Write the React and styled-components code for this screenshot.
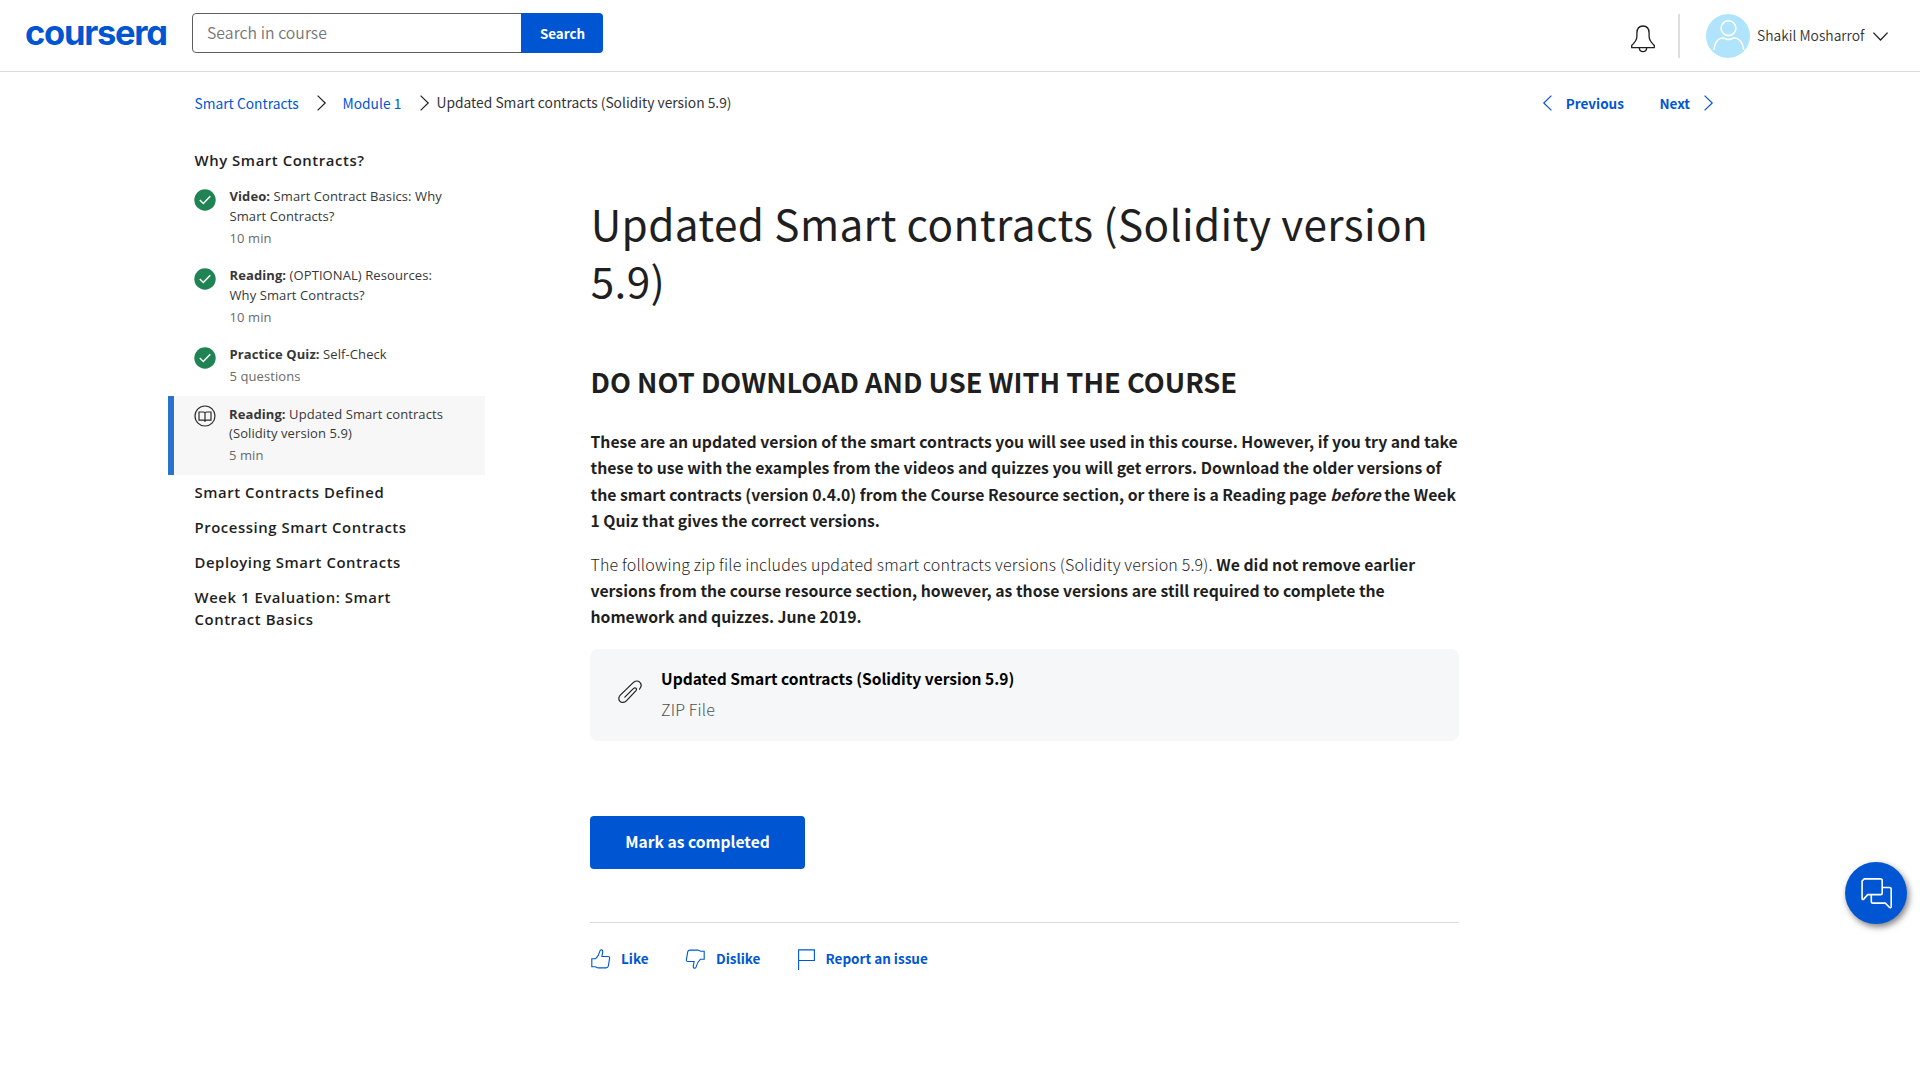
import React from "react";
import styled, { createGlobalStyle, css } from "styled-components";

const SANS = '"Noto Sans CJK SC", sans-serif';
const OPEN = '"Open Sans", sans-serif';
const BLUE = "#0056d2";

const GlobalStyle = createGlobalStyle`
  * { box-sizing: border-box; }
  body { margin: 0; background: #fff; color: #1f1f1f; font-family: ${SANS}; }
  h1, h2, h3, p, ul { margin: 0; padding: 0; }
  ul { list-style: none; }
  button, input { font-family: inherit; border: 0; padding: 0; }
  a { text-decoration: none; }
  svg { display: block; flex: none; fill: none; overflow: visible; }
`;

const Page = styled.div`
  width: 1920px;
  height: 1083px;
  overflow: hidden;
`;

/* ---------- Header ---------- */

const Header = styled.header`
  display: flex;
  align-items: flex-start;
  height: 72px;
  padding: 13px 32px 0 25px;
  border-bottom: 1px solid #dcdcdc;
`;

const Logo = styled.a`
  width: 167px;
  color: ${BLUE};
  font: 700 34.5px/40px Inter, sans-serif;
  font-feature-settings: "cv11";
  letter-spacing: -1.25px;
  white-space: nowrap;
`;

const SearchForm = styled.form`
  display: flex;
  height: 40px;
`;

const SearchInput = styled.input`
  width: 330px;
  height: 40px;
  padding: 0 14px 2px;
  border: 1px solid #5e5e5e;
  border-radius: 4px 0 0 4px;
  font-size: 15.75px;
  font-weight: 350;
  letter-spacing: 0.06px;
  background: #fff;
  &::placeholder { color: #757575; opacity: 1; }
`;

const SearchButton = styled.button`
  width: 82px;
  height: 40px;
  margin-left: -1px;
  padding: 0 0 1px 1px;
  border-radius: 0 4px 4px 0;
  background: ${BLUE};
  color: #fff;
  font-size: 13.4px;
  font-weight: 700;
`;

const Account = styled.div`
  display: flex;
  align-items: center;
  height: 46px;
  margin-left: auto;
`;

const Notifications = styled.span`
  padding-top: 5px;
`;

const Divider = styled.span`
  width: 2px;
  height: 44px;
  margin: 0 26px 0 23px;
  background: #dedede;
`;

const UserName = styled.span`
  width: 116px;
  margin-left: 7px;
  font-size: 13.85px;
  font-weight: 350;
  line-height: 24px;
  padding-bottom: 2px;
  color: #333;
  white-space: nowrap;
`;

/* ---------- Breadcrumbs ---------- */

const NavRow = styled.nav`
  display: flex;
  align-items: center;
  height: 32px;
  margin: 15px 207px 0 194px;
  font-size: 13.8px;
  line-height: 32px;
  white-space: nowrap;
`;

const Crumb = styled.a`
  width: ${(p) => p.$width}px;
  padding-left: ${(p) => p.$indent}px;
  color: ${BLUE};
`;

const Current = styled.span`
  margin-left: 8px;
  padding-bottom: 1px;
  line-height: 31px;
  color: #333;
`;

const PageLink = styled.a`
  display: flex;
  align-items: center;
  gap: 14px;
  color: ${BLUE};
  font-size: 13.5px;
  font-weight: 700;
`;

const Pager = styled.div`
  display: flex;
  gap: 35.5px;
  margin-left: auto;
`;

/* ---------- Sidebar ---------- */

const Body = styled.div`
  display: flex;
  align-items: flex-start;
`;

const Sidebar = styled.aside`
  width: 317px;
  margin: 30px 105px 0 168px;
  font-family: ${OPEN};
`;

const SectionTitle = styled.h3`
  margin: ${(p) => p.$top}px 60px 0 26.5px;
  color: #1f1f1f;
  font-size: 14.9px;
  font-weight: 600;
  line-height: 22px;
  letter-spacing: 0.56px;
`;

const Lessons = styled.ul`
  margin-top: 7px;
`;

const Lesson = styled.li`
  display: flex;
  gap: 13.5px;
  padding: 8px 0 9px 26px;
  svg { margin-top: 3px; }
  ${(p) =>
    p.$active &&
    css`
      gap: 13px;
      height: 79px;
      margin-top: 1px;
      padding-left: 20px;
      border-left: 6px solid #2a73cc;
      background: #f7f7f7;
      svg { margin-top: 1px; }
    `}
`;

const LessonName = styled.p`
  padding-top: ${(p) => (p.$active ? 1 : 0)}px;
  color: #373737;
  font-size: 13px;
  line-height: ${(p) => (p.$active ? 19 : 20)}px;
  letter-spacing: 0.09px;
  white-space: nowrap;
  b { font-weight: 700; }
`;

const LessonMeta = styled.p`
  margin-top: 2px;
  color: #6a6a6a;
  font-size: 13px;
  line-height: 20px;
  letter-spacing: 0.09px;
`;

/* ---------- Reading ---------- */

const Main = styled.main`
  width: 869px;
  padding-top: 76px;
`;

const Title = styled.h1`
  padding-left: 0.7px;
  font-size: 42.3px;
  font-weight: 400;
  line-height: 56.6px;
  letter-spacing: 0.38px;
  white-space: nowrap;
`;

const Warning = styled.h2`
  margin-top: 54.6px;
  padding-left: 0.5px;
  font-size: 27.25px;
  font-weight: 700;
  line-height: 36px;
  white-space: nowrap;
`;

const Paragraph = styled.p`
  margin-top: ${(p) => p.$top}px;
  padding-left: 0.5px;
  font-size: 15.75px;
  line-height: 26.4px;
  white-space: nowrap;
  b { font-weight: 700; }
`;

const Light = styled.span`
  font-size: 16px;
  font-weight: 300;
  line-height: 1;
  letter-spacing: 0.16px;
`;

const Attachment = styled.a`
  display: flex;
  align-items: flex-start;
  height: 92px;
  margin-top: 18.3px;
  padding: 17px 28px 0;
  border-radius: 8px;
  background: #f5f7f8;
  svg { margin-top: 14px; }
`;

const FileInfo = styled.div`
  display: flex;
  flex-direction: column;
  gap: 7px;
  margin-left: 19px;
  font-size: 15.55px;
  line-height: 24px;
`;

const FileName = styled.span`
  color: #000;
  font-weight: 700;
`;

const FileType = styled.span`
  color: #4f4f4f;
  font-size: 16px;
  font-weight: 300;
  letter-spacing: 0.15px;
`;

const CompleteButton = styled.button`
  display: block;
  width: 215px;
  height: 53px;
  margin-top: 75px;
  padding-bottom: 3px;
  border-radius: 4px;
  background: ${BLUE};
  color: #fff;
  font-size: 15.6px;
  font-weight: 700;
`;

const Feedback = styled.div`
  display: flex;
  margin-top: 53px;
  padding: 23px 0 0 1px;
  border-top: 1px solid #dcdcdc;
`;

const FeedbackButton = styled.button`
  display: flex;
  align-items: center;
  gap: 11px;
  width: ${(p) => p.$width}px;
  height: 26px;
  background: none;
  color: ${BLUE};
  font-size: 13.5px;
  font-weight: 700;
  line-height: 24px;
  text-align: left;
  white-space: nowrap;
  span { padding-bottom: 2px; }
`;

const ChatButton = styled.button`
  position: fixed;
  right: 13px;
  top: 862px;
  display: grid;
  place-items: center;
  width: 62px;
  height: 62px;
  border-radius: 50%;
  background: ${BLUE};
  box-shadow: 2px 3px 6px rgba(0, 0, 0, 0.5);
`;

/* ---------- Icons ---------- */

const ChevronRight = ({ color = "#1f1f1f" }) => (
  <svg width="9" height="16" stroke={color} strokeWidth="1.2"><path d="M.6.6 8.2 8 .6 15.4" /></svg>
);
const ChevronLeft = () => (
  <svg width="9" height="16" stroke={BLUE} strokeWidth="1.2"><path d="M8.4.6.8 8l7.6 7.4" /></svg>
);
const ChevronDown = () => (
  <svg width="15" height="9" stroke="#1f1f1f" strokeWidth="1.3"><path d="M.4.6 7.5 8 14.6.6" /></svg>
);
const Bell = () => (
  <svg width="24" height="28" viewBox="0 0 24 28" stroke="#1f1f1f" strokeWidth="1.3">
    <path d="M.7 22.6v-2.1c2.4-2.3 5.2-5.6 5.2-9V8.2C5.9 3.6 8.3 1 12 1s6.1 2.6 6.1 7.2v3.3c0 3.4 2.8 6.7 5.2 9v2.1z" />
    <path d="M8.3 22.9c.2 2.5 1.6 3.8 3.7 3.8s3.5-1.3 3.7-3.8" />
  </svg>
);
const Avatar = () => (
  <svg width="44" height="44" viewBox="0 0 44 44" stroke="#fff" strokeWidth="1.6">
    <circle cx="22" cy="22" r="22" fill="#b0e4fc" stroke="none" />
    <circle cx="22.5" cy="14.2" r="7.4" />
    <path d="M8 36c.4-6.6 3.6-12 9-12 2.2 0 3 1.5 5.5 1.5S25.8 24 28 24c5.4 0 9.3 5.4 9.7 12" />
  </svg>
);
const Done = () => (
  <svg width="22" height="22" viewBox="0 0 22 22">
    <circle cx="11" cy="11" r="10.7" fill="#1f8354" />
    <path d="m5.8 11 3.5 3.5 7-7.3" stroke="#fff" strokeWidth="1.5" />
  </svg>
);
const Book = () => (
  <svg width="22" height="22" viewBox="0 0 22 22" stroke="#2b2b2b" strokeWidth="1.2">
    <circle cx="11" cy="11" r="10" />
    <path d="M5 7h4.3c1.1 0 1.7.5 1.7 1.3C11 7.5 11.6 7 12.7 7H17v8.1h-4.3c-1 0-1.7.5-1.7 1.6 0-1.1-.7-1.6-1.7-1.6H5zM11 8.2v8.4" />
  </svg>
);
const Paperclip = () => (
  <svg width="24" height="24" viewBox="0 0 24 24" stroke="#1f1f1f" strokeWidth="1.2" strokeLinecap="round">
    <path d="M6.8 17.2 15.6 8.4c1.7-1.6 4 .5 2.4 2.3l-9.4 9.9C6.3 23 3.4 22.9 2 21.3.2 19.5.5 17 2.3 15.2L15.2 2.6c2-2 4.9-2.1 6.5-.4 1.9 1.9 1.7 4.8-.2 7" />
  </svg>
);
const thumb = "M.8 9.7h3.9c2.5-2.3 3.3-3.8 4-7C9 1.4 9.5.7 10.2.7c1.2 0 1.7 1 1.5 2.5l-.8 4.3h6.2c1.3 0 1.7.7 1.5 1.8l-1.3 7.9c-.2 1.2-.8 1.7-2.3 1.7H7.2l-3-1.2H.8z";
const Like = () => (
  <svg width="19" height="20" stroke={BLUE} strokeWidth="1.1"><path d={thumb} /></svg>
);
const Dislike = () => (
  <svg width="19" height="20" viewBox="0 0 19 20" stroke={BLUE} strokeWidth="1.1">
    <path transform="rotate(180 9.5 10)" d={thumb} />
  </svg>
);
const Flag = () => (
  <svg width="17" height="21" stroke={BLUE} strokeWidth="1.1"><path d="M.6 21V.9h15.8v10.6H.6" /></svg>
);
const Chat = () => (
  <svg width="31" height="31" viewBox="0 0 31 31" stroke="#fff" strokeWidth="1.6" strokeLinejoin="round">
    <path d="M3.2.9h16.3c1.1 0 1.7.6 1.7 1.7v12.3c0 1.1-.6 1.7-1.7 1.7H6.7l-4 4.5c-.7.8-1.6.5-1.6-.6V3z" />
    <path d="M21.3 9.5h7.2c1.1 0 1.7.6 1.7 1.7v17.2c0 1.5-1.1 1.7-1.9.8l-4-4.1H12c-1.1 0-1.7-.6-1.7-1.7v-6.8" />
  </svg>
);

const lessons = [
  { kind: "Video:", lines: ["Smart Contract Basics: Why", "Smart Contracts?"], meta: "10 min" },
  { kind: "Reading:", lines: ["(OPTIONAL) Resources:", "Why Smart Contracts?"], meta: "10 min" },
  { kind: "Practice Quiz:", lines: ["Self-Check"], meta: "5 questions" },
  { kind: "Reading:", lines: ["Updated Smart contracts", "(Solidity version 5.9)"], meta: "5 min", active: true },
];

export default function App() {
  return (
    <Page>
      <GlobalStyle />
      <Header>
        <Logo>coursera</Logo>
        <SearchForm>
          <SearchInput placeholder="Search in course" />
          <SearchButton type="button">Search</SearchButton>
        </SearchForm>
        <Account>
          <Notifications><Bell /></Notifications>
          <Divider />
          <Avatar />
          <UserName>Shakil Mosharrof</UserName>
          <ChevronDown />
        </Account>
      </Header>

      <NavRow>
        <Crumb $width={122.5} $indent={0.5}>Smart Contracts</Crumb>
        <ChevronRight />
        <Crumb $width={94} $indent={17}>Module 1</Crumb>
        <ChevronRight />
        <Current>Updated Smart contracts (Solidity version 5.9)</Current>
        <Pager>
          <PageLink><ChevronLeft />Previous</PageLink>
          <PageLink>Next<ChevronRight color={BLUE} /></PageLink>
        </Pager>
      </NavRow>

      <Body>
        <Sidebar>
          <SectionTitle $top={0}>Why Smart Contracts?</SectionTitle>
          <Lessons>
            {lessons.map((l) => (
              <Lesson key={l.lines[0]} $active={l.active}>
                {l.active ? <Book /> : <Done />}
                <div>
                  <LessonName $active={l.active}>
                    <b>{l.kind}</b> {l.lines[0]}
                    {l.lines[1] && <><br />{l.lines[1]}</>}
                  </LessonName>
                  <LessonMeta>{l.meta}</LessonMeta>
                </div>
              </Lesson>
            ))}
          </Lessons>
          <SectionTitle $top={6}>Smart Contracts Defined</SectionTitle>
          <SectionTitle $top={13}>Processing Smart Contracts</SectionTitle>
          <SectionTitle $top={13}>Deploying Smart Contracts</SectionTitle>
          <SectionTitle $top={13}>Week 1 Evaluation: Smart Contract Basics</SectionTitle>
        </Sidebar>

        <Main>
          <Title>Updated Smart contracts (Solidity version<br />5.9)</Title>
          <Warning>DO NOT DOWNLOAD AND USE WITH THE COURSE</Warning>
          <Paragraph $top={30.1}>
            <b>
              These are an updated version of the smart contracts you will see used in this course. However, if you try and take<br />
              these to use with the examples from the videos and quizzes you will get errors. Download the older versions of<br />
              the smart contracts (version 0.4.0) from the Course Resource section, or there is a Reading page <em>before</em> the Week<br />
              1 Quiz that gives the correct versions.
            </b>
          </Paragraph>
          <Paragraph $top={17.1}>
            <Light>The following zip file includes updated smart contracts versions (Solidity version 5.9). </Light>
            <b>We did not remove earlier<br />
            versions from the course resource section, however, as those versions are still required to complete the<br />
            homework and quizzes. June 2019.</b>
          </Paragraph>
          <Attachment>
            <Paperclip />
            <FileInfo>
              <FileName>Updated Smart contracts (Solidity version 5.9)</FileName>
              <FileType>ZIP File</FileType>
            </FileInfo>
          </Attachment>
          <CompleteButton>Mark as completed</CompleteButton>
          <Feedback>
            <FeedbackButton $width={95}><Like /><span>Like</span></FeedbackButton>
            <FeedbackButton $width={111.5}><Dislike /><span>Dislike</span></FeedbackButton>
            <FeedbackButton $width={140}><Flag /><span>Report an issue</span></FeedbackButton>
          </Feedback>
        </Main>
      </Body>

      <ChatButton><Chat /></ChatButton>
    </Page>
  );
}
